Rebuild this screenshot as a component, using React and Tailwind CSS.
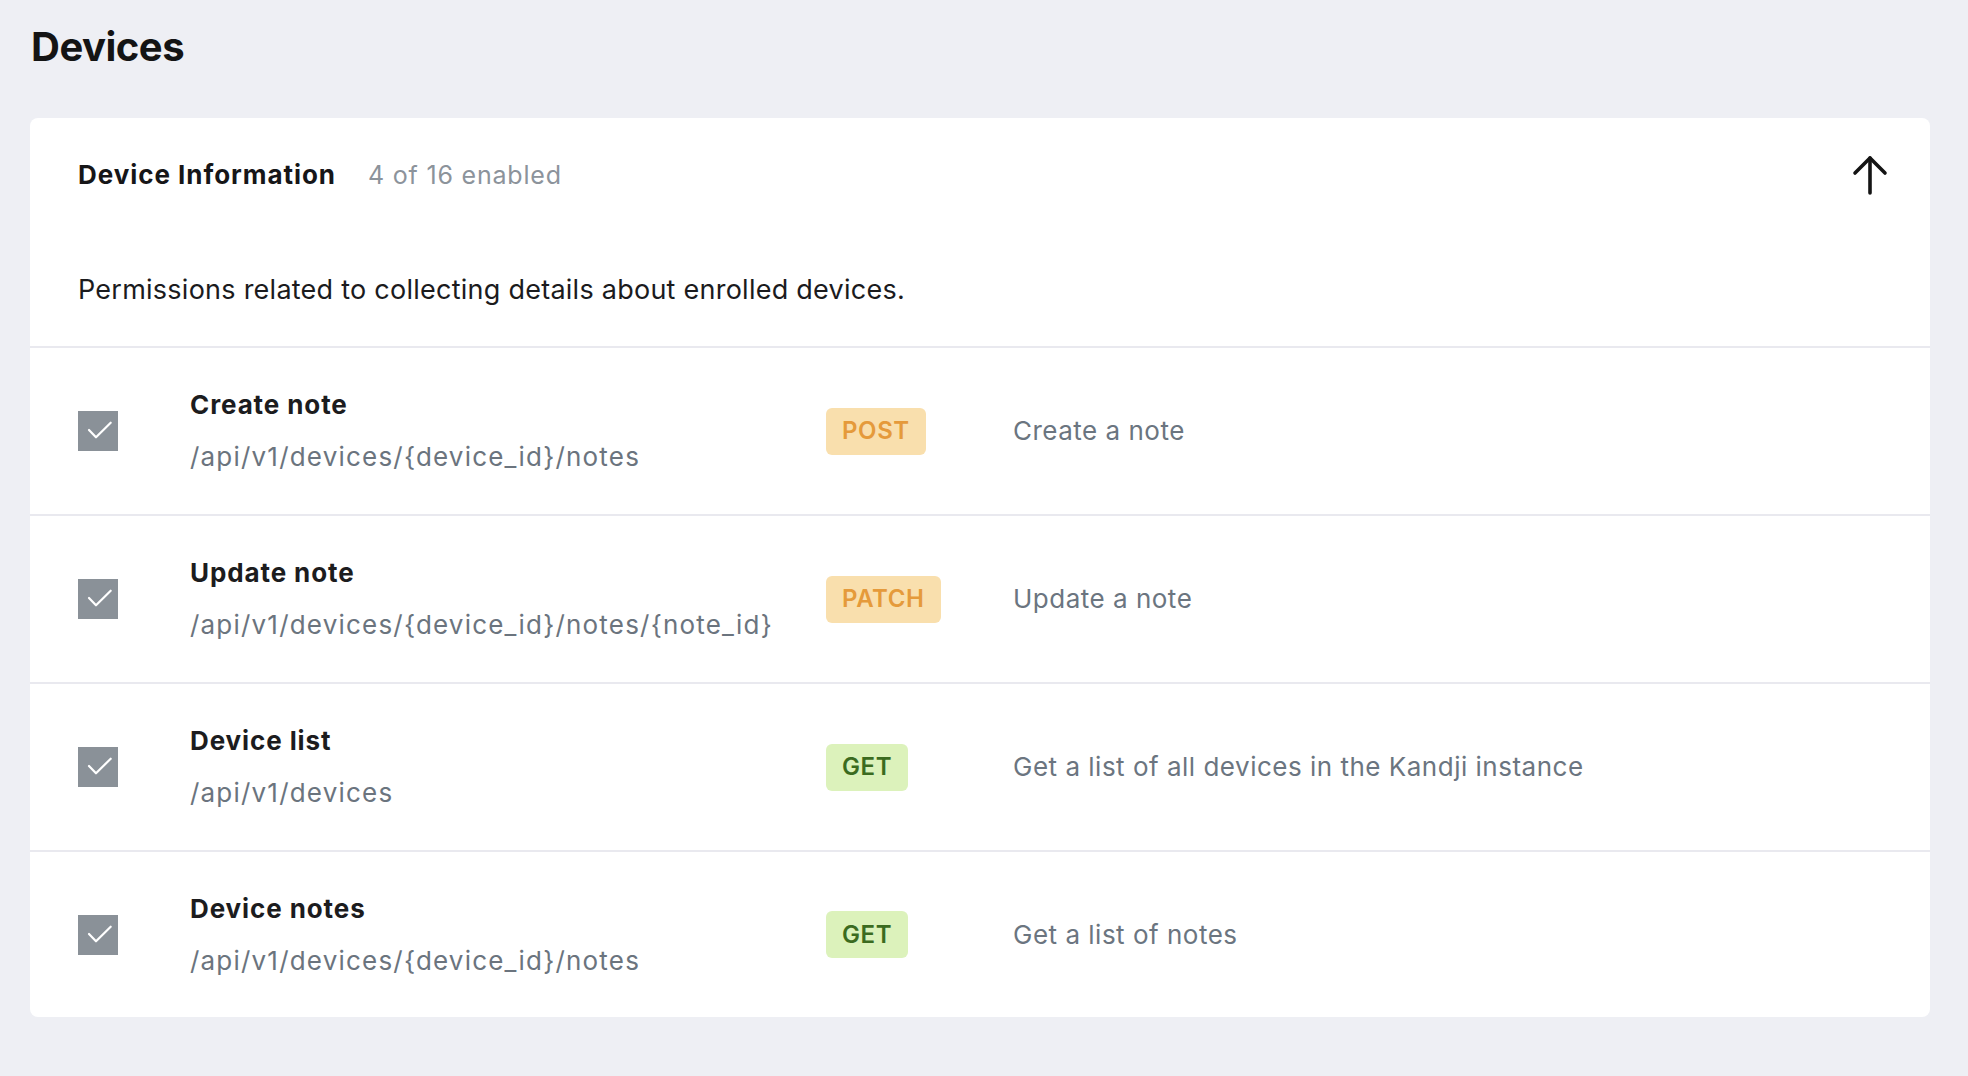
import React from "react";

const rows = [
  { title: "Create note", path: "/api/v1/devices/{device_id}/notes", method: "POST", desc: "Create a note" },
  { title: "Update note", path: "/api/v1/devices/{device_id}/notes/{note_id}", method: "PATCH", desc: "Update a note" },
  { title: "Device list", path: "/api/v1/devices", method: "GET", desc: "Get a list of all devices in the Kandji instance" },
  { title: "Device notes", path: "/api/v1/devices/{device_id}/notes", method: "GET", desc: "Get a list of notes" },
];

function Badge({ method }) {
  const cls =
    method === "GET"
      ? "bg-[#dcf2bb] text-[#3b6b20]"
      : "bg-[#f9dfad] text-[#e59a3b]";
  return (
    <span className={`inline-flex h-[47px] items-center rounded-[6px] px-[16px] text-[24px] font-semibold leading-none tracking-[0.6px] ${cls}`}>
      {method}
    </span>
  );
}

function Checkbox() {
  return (
    <div className="flex h-[40px] w-[40px] shrink-0 items-center justify-center bg-[#8a9198]">
      <svg width="40" height="40" viewBox="0 0 40 40" fill="none">
        <path d="M11 19 L18 26.3 L32.7 11.7" stroke="white" strokeWidth="2.2" strokeLinecap="round" strokeLinejoin="round" />
      </svg>
    </div>
  );
}

export default function App() {
  return (
    <div className="min-h-screen bg-[#eeeff4] pl-[30px] pr-[38px] pt-[23px] pb-[50px] font-['Inter','Liberation_Sans',sans-serif]">
      <h1 className="pl-[1px] text-[40px] font-bold leading-[48px] tracking-[-0.5px] text-[#141414]">Devices</h1>
      <div className="mt-[47px] rounded-[8px] bg-white">
        <div className="flex items-center justify-between pl-[48px] pr-[42px] pt-[36px]">
          <div className="flex items-center">
            <span className="text-[26px] font-bold leading-[36px] tracking-[0.95px] text-[#161618]">Device Information</span>
            <span className="ml-[32px] text-[25px] leading-[36px] tracking-[0.8px] text-[#8c939b]">4 of 16 enabled</span>
          </div>
          <svg width="36" height="42" viewBox="0 0 36 42" fill="none">
            <path d="M18 4 V39" stroke="#141414" strokeWidth="3.6" strokeLinecap="round" />
            <path d="M3 19 L18 4 L33 19" stroke="#141414" strokeWidth="3.6" strokeLinecap="round" strokeLinejoin="round" />
          </svg>
        </div>
        <p className="mt-[76px] pb-[38px] pl-[48px] text-[27px] leading-[36px] tracking-[0.25px] text-[#1b1b1d]">
          Permissions related to collecting details about enrolled devices.
        </p>
        {rows.map((r, i) => (
          <div
            key={i}
            className={`flex items-center border-t-2 border-[#e9e9ef] pl-[48px] ${i === rows.length - 1 ? "h-[167px]" : "h-[168px]"}`}
          >
            <Checkbox />
            <div className="ml-[72px] w-[636px] shrink-0">
              <div className="text-[26px] font-bold leading-[36px] tracking-[0.9px] text-[#1c1c1e]">{r.title}</div>
              <div className="mt-[16px] text-[26px] leading-[36px] tracking-[1.2px] text-[#6b747e]">{r.path}</div>
            </div>
            <div className="w-[187px] shrink-0">
              <Badge method={r.method} />
            </div>
            <div className="text-[26px] leading-[36px] tracking-[0.5px] text-[#6b7580]">{r.desc}</div>
          </div>
        ))}
      </div>
    </div>
  );
}
